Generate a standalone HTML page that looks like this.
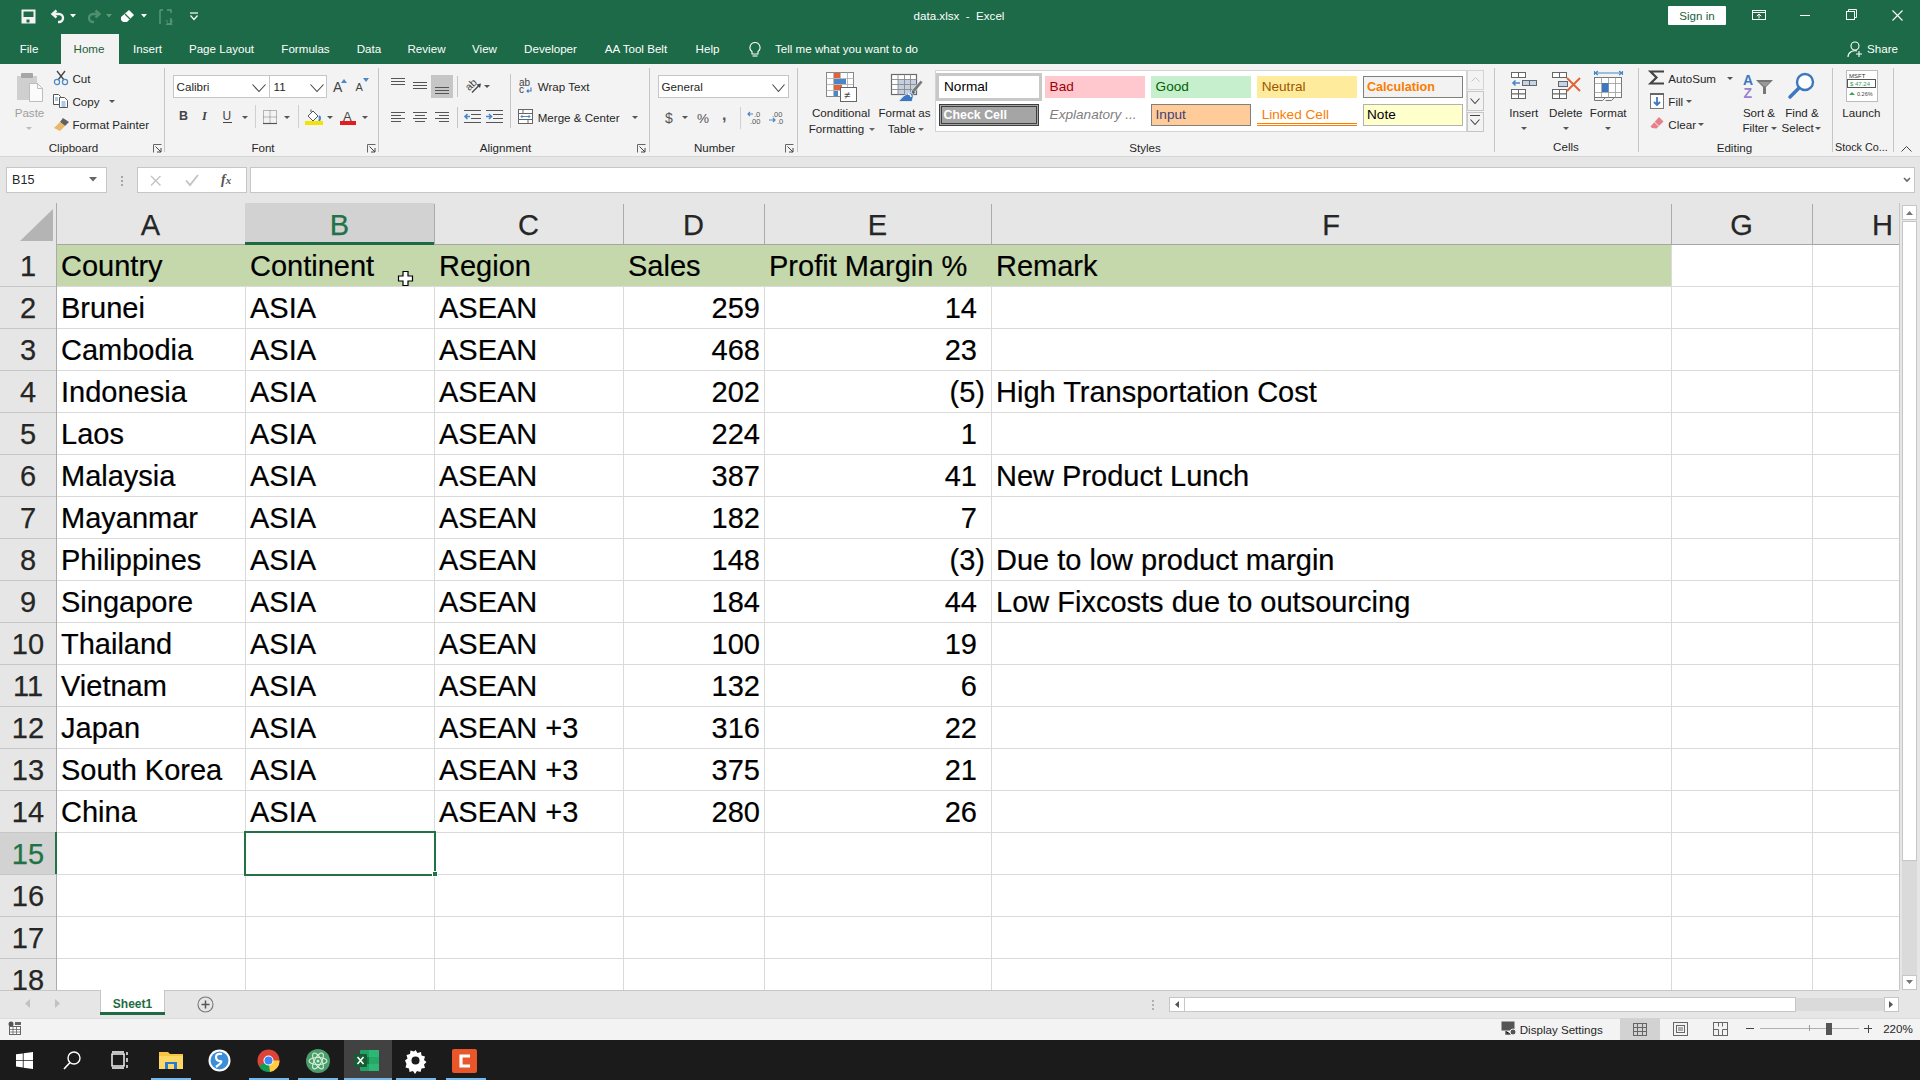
<!DOCTYPE html>
<html><head><meta charset="utf-8">
<style>
*{box-sizing:border-box}
html,body{margin:0;padding:0;width:1920px;height:1080px;overflow:hidden;background:#fff;font-family:"Liberation Sans",sans-serif;position:relative}
.a{position:absolute}
.t{position:absolute;white-space:nowrap}
svg.a{overflow:visible}
.ch{position:absolute;top:203px;height:41px;font-size:29px;text-align:center;line-height:44px;color:#262626;overflow:hidden;-webkit-text-stroke:0.25px #262626}
.ch.sel{color:#217346;-webkit-text-stroke:0.25px #217346}
.rh{position:absolute;left:0;width:56px;height:42px;font-size:29px;text-align:center;line-height:44px;color:#262626;-webkit-text-stroke:0.25px #262626}
.rh.sel{color:#217346;-webkit-text-stroke:0.25px #217346}
.c{position:absolute;height:42px;font-size:29px;line-height:44px;color:#000;white-space:nowrap;-webkit-text-stroke:0.2px #000}
.c.r{text-align:right}
</style></head><body>
<div class="a" style="left:0px;top:203px;width:1920px;height:787px;background:#fff"></div>
<div class="a" style="left:0px;top:203px;width:1899px;height:41px;background:#e6e6e6"></div>
<div class="a" style="left:56px;top:286px;width:1843px;height:1px;background:#dadada"></div>
<div class="a" style="left:56px;top:328px;width:1843px;height:1px;background:#dadada"></div>
<div class="a" style="left:56px;top:370px;width:1843px;height:1px;background:#dadada"></div>
<div class="a" style="left:56px;top:412px;width:1843px;height:1px;background:#dadada"></div>
<div class="a" style="left:56px;top:454px;width:1843px;height:1px;background:#dadada"></div>
<div class="a" style="left:56px;top:496px;width:1843px;height:1px;background:#dadada"></div>
<div class="a" style="left:56px;top:538px;width:1843px;height:1px;background:#dadada"></div>
<div class="a" style="left:56px;top:580px;width:1843px;height:1px;background:#dadada"></div>
<div class="a" style="left:56px;top:622px;width:1843px;height:1px;background:#dadada"></div>
<div class="a" style="left:56px;top:664px;width:1843px;height:1px;background:#dadada"></div>
<div class="a" style="left:56px;top:706px;width:1843px;height:1px;background:#dadada"></div>
<div class="a" style="left:56px;top:748px;width:1843px;height:1px;background:#dadada"></div>
<div class="a" style="left:56px;top:790px;width:1843px;height:1px;background:#dadada"></div>
<div class="a" style="left:56px;top:832px;width:1843px;height:1px;background:#dadada"></div>
<div class="a" style="left:56px;top:874px;width:1843px;height:1px;background:#dadada"></div>
<div class="a" style="left:56px;top:916px;width:1843px;height:1px;background:#dadada"></div>
<div class="a" style="left:56px;top:958px;width:1843px;height:1px;background:#dadada"></div>
<div class="a" style="left:56px;top:1000px;width:1843px;height:1px;background:#dadada"></div>
<div class="a" style="left:245px;top:244px;width:1px;height:746px;background:#dadada"></div>
<div class="a" style="left:434px;top:244px;width:1px;height:746px;background:#dadada"></div>
<div class="a" style="left:623px;top:244px;width:1px;height:746px;background:#dadada"></div>
<div class="a" style="left:764px;top:244px;width:1px;height:746px;background:#dadada"></div>
<div class="a" style="left:991px;top:244px;width:1px;height:746px;background:#dadada"></div>
<div class="a" style="left:1671px;top:244px;width:1px;height:746px;background:#dadada"></div>
<div class="a" style="left:1812px;top:244px;width:1px;height:746px;background:#dadada"></div>
<div class="a" style="left:56px;top:244px;width:1615px;height:42px;background:#c4d8ac"></div>
<div class="a" style="left:245px;top:204px;width:1px;height:40px;background:#ababab"></div>
<div class="a" style="left:434px;top:204px;width:1px;height:40px;background:#ababab"></div>
<div class="a" style="left:623px;top:204px;width:1px;height:40px;background:#ababab"></div>
<div class="a" style="left:764px;top:204px;width:1px;height:40px;background:#ababab"></div>
<div class="a" style="left:991px;top:204px;width:1px;height:40px;background:#ababab"></div>
<div class="a" style="left:1671px;top:204px;width:1px;height:40px;background:#ababab"></div>
<div class="a" style="left:1812px;top:204px;width:1px;height:40px;background:#ababab"></div>
<div class="a" style="left:245px;top:203px;width:189px;height:41px;background:#d2d2d2"></div>
<div class="ch" style="left:56px;width:189px">A</div>
<div class="ch sel" style="left:245px;width:189px">B</div>
<div class="ch" style="left:434px;width:189px">C</div>
<div class="ch" style="left:623px;width:141px">D</div>
<div class="ch" style="left:764px;width:227px">E</div>
<div class="ch" style="left:991px;width:680px">F</div>
<div class="ch" style="left:1671px;width:141px">G</div>
<div class="ch" style="left:1812px;width:87px"><div style="position:absolute;left:0;width:141px;text-align:center">H</div></div>
<div class="a" style="left:0px;top:244px;width:1899px;height:1px;background:#a6a6a6"></div>
<div class="a" style="left:245px;top:242px;width:189px;height:2.5px;background:#1e6b43"></div>
<div class="a" style="left:0px;top:244px;width:56px;height:746px;background:#e6e6e6"></div>
<div class="a" style="left:0px;top:832px;width:56px;height:42px;background:#d2d2d2"></div>
<div class="a" style="left:0px;top:286px;width:56px;height:1px;background:#c6c6c6"></div>
<div class="rh" style="top:244px">1</div>
<div class="a" style="left:0px;top:328px;width:56px;height:1px;background:#c6c6c6"></div>
<div class="rh" style="top:286px">2</div>
<div class="a" style="left:0px;top:370px;width:56px;height:1px;background:#c6c6c6"></div>
<div class="rh" style="top:328px">3</div>
<div class="a" style="left:0px;top:412px;width:56px;height:1px;background:#c6c6c6"></div>
<div class="rh" style="top:370px">4</div>
<div class="a" style="left:0px;top:454px;width:56px;height:1px;background:#c6c6c6"></div>
<div class="rh" style="top:412px">5</div>
<div class="a" style="left:0px;top:496px;width:56px;height:1px;background:#c6c6c6"></div>
<div class="rh" style="top:454px">6</div>
<div class="a" style="left:0px;top:538px;width:56px;height:1px;background:#c6c6c6"></div>
<div class="rh" style="top:496px">7</div>
<div class="a" style="left:0px;top:580px;width:56px;height:1px;background:#c6c6c6"></div>
<div class="rh" style="top:538px">8</div>
<div class="a" style="left:0px;top:622px;width:56px;height:1px;background:#c6c6c6"></div>
<div class="rh" style="top:580px">9</div>
<div class="a" style="left:0px;top:664px;width:56px;height:1px;background:#c6c6c6"></div>
<div class="rh" style="top:622px">10</div>
<div class="a" style="left:0px;top:706px;width:56px;height:1px;background:#c6c6c6"></div>
<div class="rh" style="top:664px">11</div>
<div class="a" style="left:0px;top:748px;width:56px;height:1px;background:#c6c6c6"></div>
<div class="rh" style="top:706px">12</div>
<div class="a" style="left:0px;top:790px;width:56px;height:1px;background:#c6c6c6"></div>
<div class="rh" style="top:748px">13</div>
<div class="a" style="left:0px;top:832px;width:56px;height:1px;background:#c6c6c6"></div>
<div class="rh" style="top:790px">14</div>
<div class="a" style="left:0px;top:874px;width:56px;height:1px;background:#c6c6c6"></div>
<div class="rh sel" style="top:832px">15</div>
<div class="a" style="left:0px;top:916px;width:56px;height:1px;background:#c6c6c6"></div>
<div class="rh" style="top:874px">16</div>
<div class="a" style="left:0px;top:958px;width:56px;height:1px;background:#c6c6c6"></div>
<div class="rh" style="top:916px">17</div>
<div class="a" style="left:0px;top:1000px;width:56px;height:1px;background:#c6c6c6"></div>
<div class="rh" style="top:958px">18</div>
<div class="a" style="left:56px;top:203px;width:1px;height:787px;background:#ababab"></div>
<div class="a" style="left:55px;top:832px;width:2px;height:42px;background:#217346"></div>
<svg class="a" style="left:0px;top:203px;" width="56" height="41" viewBox="0 0 56 41"><polygon points="20,38 53,38 53,6" fill="#b4b4b4"/></svg>
<div class="c" style="top:244px;left:61px">Country</div>
<div class="c" style="top:244px;left:250px">Continent</div>
<div class="c" style="top:244px;left:439px">Region</div>
<div class="c" style="top:244px;left:628px">Sales</div>
<div class="c" style="top:244px;left:769px">Profit Margin %</div>
<div class="c" style="top:244px;left:996px">Remark</div>
<div class="c" style="top:286px;left:61px">Brunei</div>
<div class="c" style="top:286px;left:250px">ASIA</div>
<div class="c" style="top:286px;left:439px">ASEAN</div>
<div class="c r" style="top:286px;left:623px;width:137px">259</div>
<div class="c r" style="top:286px;left:764px;width:213px">14</div>
<div class="c" style="top:328px;left:61px">Cambodia</div>
<div class="c" style="top:328px;left:250px">ASIA</div>
<div class="c" style="top:328px;left:439px">ASEAN</div>
<div class="c r" style="top:328px;left:623px;width:137px">468</div>
<div class="c r" style="top:328px;left:764px;width:213px">23</div>
<div class="c" style="top:370px;left:61px">Indonesia</div>
<div class="c" style="top:370px;left:250px">ASIA</div>
<div class="c" style="top:370px;left:439px">ASEAN</div>
<div class="c r" style="top:370px;left:623px;width:137px">202</div>
<div class="c r" style="top:370px;left:764px;width:221px">(5)</div>
<div class="c" style="top:370px;left:996px">High Transportation Cost</div>
<div class="c" style="top:412px;left:61px">Laos</div>
<div class="c" style="top:412px;left:250px">ASIA</div>
<div class="c" style="top:412px;left:439px">ASEAN</div>
<div class="c r" style="top:412px;left:623px;width:137px">224</div>
<div class="c r" style="top:412px;left:764px;width:213px">1</div>
<div class="c" style="top:454px;left:61px">Malaysia</div>
<div class="c" style="top:454px;left:250px">ASIA</div>
<div class="c" style="top:454px;left:439px">ASEAN</div>
<div class="c r" style="top:454px;left:623px;width:137px">387</div>
<div class="c r" style="top:454px;left:764px;width:213px">41</div>
<div class="c" style="top:454px;left:996px">New Product Lunch</div>
<div class="c" style="top:496px;left:61px">Mayanmar</div>
<div class="c" style="top:496px;left:250px">ASIA</div>
<div class="c" style="top:496px;left:439px">ASEAN</div>
<div class="c r" style="top:496px;left:623px;width:137px">182</div>
<div class="c r" style="top:496px;left:764px;width:213px">7</div>
<div class="c" style="top:538px;left:61px">Philippines</div>
<div class="c" style="top:538px;left:250px">ASIA</div>
<div class="c" style="top:538px;left:439px">ASEAN</div>
<div class="c r" style="top:538px;left:623px;width:137px">148</div>
<div class="c r" style="top:538px;left:764px;width:221px">(3)</div>
<div class="c" style="top:538px;left:996px">Due to low product margin</div>
<div class="c" style="top:580px;left:61px">Singapore</div>
<div class="c" style="top:580px;left:250px">ASIA</div>
<div class="c" style="top:580px;left:439px">ASEAN</div>
<div class="c r" style="top:580px;left:623px;width:137px">184</div>
<div class="c r" style="top:580px;left:764px;width:213px">44</div>
<div class="c" style="top:580px;left:996px">Low Fixcosts due to outsourcing</div>
<div class="c" style="top:622px;left:61px">Thailand</div>
<div class="c" style="top:622px;left:250px">ASIA</div>
<div class="c" style="top:622px;left:439px">ASEAN</div>
<div class="c r" style="top:622px;left:623px;width:137px">100</div>
<div class="c r" style="top:622px;left:764px;width:213px">19</div>
<div class="c" style="top:664px;left:61px">Vietnam</div>
<div class="c" style="top:664px;left:250px">ASIA</div>
<div class="c" style="top:664px;left:439px">ASEAN</div>
<div class="c r" style="top:664px;left:623px;width:137px">132</div>
<div class="c r" style="top:664px;left:764px;width:213px">6</div>
<div class="c" style="top:706px;left:61px">Japan</div>
<div class="c" style="top:706px;left:250px">ASIA</div>
<div class="c" style="top:706px;left:439px">ASEAN +3</div>
<div class="c r" style="top:706px;left:623px;width:137px">316</div>
<div class="c r" style="top:706px;left:764px;width:213px">22</div>
<div class="c" style="top:748px;left:61px">South Korea</div>
<div class="c" style="top:748px;left:250px">ASIA</div>
<div class="c" style="top:748px;left:439px">ASEAN +3</div>
<div class="c r" style="top:748px;left:623px;width:137px">375</div>
<div class="c r" style="top:748px;left:764px;width:213px">21</div>
<div class="c" style="top:790px;left:61px">China</div>
<div class="c" style="top:790px;left:250px">ASIA</div>
<div class="c" style="top:790px;left:439px">ASEAN +3</div>
<div class="c r" style="top:790px;left:623px;width:137px">280</div>
<div class="c r" style="top:790px;left:764px;width:213px">26</div>
<div class="a" style="left:244px;top:831px;width:192px;height:45px;border:2px solid #217346;background:transparent"></div>
<div class="a" style="left:432px;top:871px;width:6px;height:6px;background:#217346;border:1px solid #fff"></div>
<div class="a" style="left:1899px;top:203px;width:1px;height:787px;background:#c6c6c6"></div>
<div class="a" style="left:1900px;top:203px;width:20px;height:787px;background:#e6e6e6"></div>
<div class="a" style="left:1902px;top:205px;width:15px;height:15px;background:#fff;border:1px solid #c6c6c6"></div>
<svg class="a" style="left:1902px;top:205px;" width="15" height="15" viewBox="0 0 15 15"><polygon points="4,10 11,10 7.5,6" fill="#777"/></svg>
<div class="a" style="left:1902px;top:221px;width:15px;height:640px;background:#fff;border:1px solid #c6c6c6"></div>
<div class="a" style="left:1902px;top:861px;width:15px;height:115px;background:#dadada"></div>
<div class="a" style="left:1902px;top:975px;width:15px;height:15px;background:#fff;border:1px solid #c6c6c6"></div>
<svg class="a" style="left:1902px;top:975px;" width="15" height="15" viewBox="0 0 15 15"><polygon points="4,5 11,5 7.5,9" fill="#777"/></svg>
<svg class="a" style="left:398px;top:271px;" width="15" height="15" viewBox="0 0 15 15"><path d="M5 0.5h5v4.5h4.5v5H10v4.5H5V10H0.5V5H5z" fill="#fff" stroke="#000" stroke-width="1.2"/></svg>
<div class="a" style="left:0px;top:0px;width:1920px;height:64px;background:#1c6a48"></div>
<svg class="a" style="left:21px;top:9px;" width="16" height="16" viewBox="0 0 16 16"><rect x="1.5" y="1.5" width="12" height="12" fill="none" stroke="#f3f3f3" stroke-width="2"/><rect x="2" y="8" width="11" height="6" fill="#f3f3f3"/><rect x="5.5" y="10.5" width="3" height="3" fill="#1c6a48"/></svg>
<svg class="a" style="left:50px;top:9px;" width="18" height="16" viewBox="0 0 18 16"><path d="M3 5h6a4 4 0 0 1 0 8h-1" fill="none" stroke="#f3f3f3" stroke-width="2.4"/><path d="M6.5 1.5L2.5 5l4 3.5" stroke="#f3f3f3" stroke-width="2.4" fill="none"/></svg>
<svg class="a" style="left:70px;top:14px;" width="7" height="4" viewBox="0 0 7 4"><polygon points="0,0 6,0 3,3.5" fill="#fff"/></svg>
<svg class="a" style="left:86px;top:9px;" width="16" height="16" viewBox="0 0 16 16"><path d="M13 5H7a4 4 0 0 0 0 8h1" fill="none" stroke="#4f8f6c" stroke-width="2.4"/><path d="M9.5 1.5l4 3.5-4 3.5" stroke="#4f8f6c" stroke-width="2.4" fill="none"/></svg>
<svg class="a" style="left:106px;top:14px;" width="7" height="4" viewBox="0 0 7 4"><polygon points="0,0 6,0 3,3.5" fill="#5d9b78"/></svg>
<svg class="a" style="left:120px;top:9px;" width="15" height="15" viewBox="0 0 15 15"><path d="M9 1l5 5-7 7-4 0-2-2 0-3z" fill="#fff"/><path d="M5 5l5 5" stroke="#217346" stroke-width="1.2"/></svg>
<svg class="a" style="left:141px;top:14px;" width="7" height="4" viewBox="0 0 7 4"><polygon points="0,0 6,0 3,3.5" fill="#fff"/></svg>
<svg class="a" style="left:157px;top:8px;" width="18" height="18" viewBox="0 0 18 18"><path d="M3 2h3M3 2v14M10 2h4v3M14 10v6h-4" stroke="#5d9b78" stroke-width="1.4" fill="none"/><text x="8" y="17" font-size="7" fill="#5d9b78" font-family="Liberation Sans">12</text></svg>
<svg class="a" style="left:189px;top:12px;" width="10" height="9" viewBox="0 0 10 9"><path d="M1 1h8" stroke="#fff" stroke-width="1.2"/><path d="M1.5 3.5l3.5 4 3.5-4" fill="none" stroke="#fff" stroke-width="1.2"/></svg>
<div class="t" style="left:759px;width:400px;text-align:center;top:9.78px;font-size:11.6px;line-height:11.6px;color:#fff;">data.xlsx&nbsp; -&nbsp; Excel</div>
<div class="a" style="left:1668px;top:6px;width:58px;height:19px;background:#fff;border-radius:1px"></div>
<div class="t" style="left:1497px;width:400px;text-align:center;top:9.88px;font-size:11.6px;line-height:11.6px;color:#215f3b;">Sign in</div>
<svg class="a" style="left:1752px;top:10px;" width="14" height="10" viewBox="0 0 14 10"><rect x="0.5" y="0.5" width="13" height="9" fill="none" stroke="#fff"/><path d="M0.5 2.5h13" stroke="#fff"/><path d="M7 8.5V4M4.8 6.2L7 4l2.2 2.2" stroke="#fff" fill="none"/></svg>
<div class="a" style="left:1800px;top:15px;width:10px;height:1px;background:#fff"></div>
<svg class="a" style="left:1846px;top:9px;" width="11" height="11" viewBox="0 0 11 11"><rect x="0.5" y="2.5" width="8" height="8" fill="none" stroke="#fff"/><path d="M2.5 2.5V0.5h8v8h-2" fill="none" stroke="#fff"/></svg>
<svg class="a" style="left:1892px;top:10px;" width="11" height="11" viewBox="0 0 11 11"><path d="M0.5 0.5l10 10M10.5 0.5l-10 10" stroke="#fff" stroke-width="1.1"/></svg>
<div class="a" style="left:61px;top:34px;width:58px;height:30px;background:#f3f3f3"></div>
<div class="t" style="left:-171.0px;width:400px;text-align:center;top:43.18px;font-size:11.6px;line-height:11.6px;color:#fff;">File</div>
<div class="t" style="left:-111.0px;width:400px;text-align:center;top:43.18px;font-size:11.6px;line-height:11.6px;color:#215f3b;">Home</div>
<div class="t" style="left:-52.5px;width:400px;text-align:center;top:43.18px;font-size:11.6px;line-height:11.6px;color:#fff;">Insert</div>
<div class="t" style="left:21.5px;width:400px;text-align:center;top:43.18px;font-size:11.6px;line-height:11.6px;color:#fff;">Page Layout</div>
<div class="t" style="left:105.5px;width:400px;text-align:center;top:43.18px;font-size:11.6px;line-height:11.6px;color:#fff;">Formulas</div>
<div class="t" style="left:169.0px;width:400px;text-align:center;top:43.18px;font-size:11.6px;line-height:11.6px;color:#fff;">Data</div>
<div class="t" style="left:226.5px;width:400px;text-align:center;top:43.18px;font-size:11.6px;line-height:11.6px;color:#fff;">Review</div>
<div class="t" style="left:284.5px;width:400px;text-align:center;top:43.18px;font-size:11.6px;line-height:11.6px;color:#fff;">View</div>
<div class="t" style="left:350.5px;width:400px;text-align:center;top:43.18px;font-size:11.6px;line-height:11.6px;color:#fff;">Developer</div>
<div class="t" style="left:436.0px;width:400px;text-align:center;top:43.18px;font-size:11.6px;line-height:11.6px;color:#fff;">AA Tool Belt</div>
<div class="t" style="left:507.5px;width:400px;text-align:center;top:43.18px;font-size:11.6px;line-height:11.6px;color:#fff;">Help</div>
<div class="t" style="left:775px;top:43.18px;font-size:11.6px;line-height:11.6px;color:#fff;">Tell me what you want to do</div>
<svg class="a" style="left:747px;top:41px;" width="16" height="17" viewBox="0 0 16 17"><path d="M8 1.5a5 5 0 0 0-3 9v2.5h6v-2.5a5 5 0 0 0-3-9z" fill="none" stroke="#fff" stroke-width="1.1"/><path d="M5.5 15h5" stroke="#fff" stroke-width="1.1"/></svg>
<svg class="a" style="left:1847px;top:41px;" width="17" height="17" viewBox="0 0 17 17"><circle cx="8" cy="5" r="4" fill="none" stroke="#fff" stroke-width="1.1"/><path d="M1 16a7 6 0 0 1 9-6" fill="none" stroke="#fff" stroke-width="1.1"/><path d="M12 10v6M9 13h6" stroke="#fff" stroke-width="1.1"/></svg>
<div class="t" style="left:1867px;top:42.68px;font-size:11.6px;line-height:11.6px;color:#fff;font-weight:normal">Share</div>
<div class="a" style="left:0px;top:64px;width:1920px;height:93px;background:#f3f3f3"></div>
<div class="a" style="left:0px;top:156px;width:1920px;height:1px;background:#d6d6d6"></div>
<svg class="a" style="left:16px;top:72px;" width="30" height="30" viewBox="0 0 30 30"><rect x="1" y="4" width="20" height="24" fill="#cfcfcf"/><rect x="5" y="1" width="12" height="5" rx="1" fill="#a6a6a6"/><path d="M13.5 11.5h8l5 5v13h-13z" fill="#fbfbfb" stroke="#bdbdbd"/><path d="M21.5 11.5v5h5" fill="none" stroke="#bdbdbd"/></svg>
<div class="t" style="left:-170.5px;width:400px;text-align:center;top:106.58px;font-size:11.6px;line-height:11.6px;color:#a0a0a0;">Paste</div>
<svg class="a" style="left:25.5px;top:126.5px;" width="6" height="3" viewBox="0 0 6 3"><polygon points="0,0 6,0 3,3" fill="#bdbdbd"/></svg>
<svg class="a" style="left:53px;top:70px;" width="16" height="15" viewBox="0 0 16 15"><path d="M4 1l7 9M12 1L5 10" stroke="#444" stroke-width="1.3"/><circle cx="4" cy="12" r="2.6" fill="none" stroke="#4a87c8" stroke-width="1.2"/><circle cx="12" cy="12" r="2.6" fill="none" stroke="#4a87c8" stroke-width="1.2"/></svg>
<div class="t" style="left:72.4px;top:72.88px;font-size:11.6px;line-height:11.6px;color:#262626;">Cut</div>
<svg class="a" style="left:53px;top:94px;" width="16" height="14" viewBox="0 0 16 14"><path d="M0.5 0.5h5l2 2v8h-7z" fill="#fff" stroke="#555"/><path d="M6.5 3.5h5l3 3v7h-8z" fill="#fff" stroke="#555"/><path d="M2 4h3M2 6h3M8.5 8h4M8.5 10h4M8.5 12h4" stroke="#4a87c8" stroke-width="0.9"/></svg>
<div class="t" style="left:72.4px;top:95.88px;font-size:11.6px;line-height:11.6px;color:#262626;">Copy</div>
<svg class="a" style="left:109.4px;top:100.0px;" width="6" height="3" viewBox="0 0 6 3"><polygon points="0,0 6,0 3,3" fill="#555"/></svg>
<svg class="a" style="left:53px;top:117px;" width="17" height="14" viewBox="0 0 17 14"><path d="M10 1l6 4-4 4-5-4z" fill="#606060"/><path d="M7 5l5 4-5 5-6-3z" fill="#e6b867"/></svg>
<div class="t" style="left:72.4px;top:119.08px;font-size:11.6px;line-height:11.6px;color:#262626;">Format Painter</div>
<div class="t" style="left:-126.5px;width:400px;text-align:center;top:141.78px;font-size:11.6px;line-height:11.6px;color:#262626;">Clipboard</div>
<svg class="a" style="left:152.5px;top:143.5px;" width="9" height="9" viewBox="0 0 9 9"><path d="M0.5 8.5V0.5h8" fill="none" stroke="#666"/><path d="M2.5 2.5l5.5 5.5M8 4v4H4" fill="none" stroke="#444"/></svg>
<div class="a" style="left:164px;top:68px;width:1px;height:84px;background:#c6c6c6"></div>
<div class="a" style="left:173px;top:75px;width:97px;height:23px;background:#fff;border:1px solid #c6c6c6"></div>
<div class="t" style="left:176.6px;top:81.18px;font-size:11.6px;line-height:11.6px;color:#262626;">Calibri</div>
<svg class="a" style="left:252px;top:83.5px;" width="14" height="8" viewBox="0 0 14 8"><path d="M0.5 0.5L7.0 7.5L13.5 0.5" fill="none" stroke="#444" stroke-width="1.1"/></svg>
<div class="a" style="left:269px;top:75px;width:58px;height:23px;background:#fff;border:1px solid #c6c6c6"></div>
<div class="t" style="left:273.6px;top:81.18px;font-size:11.6px;line-height:11.6px;color:#262626;">11</div>
<svg class="a" style="left:309.5px;top:83.5px;" width="14" height="8" viewBox="0 0 14 8"><path d="M0.5 0.5L7.0 7.5L13.5 0.5" fill="none" stroke="#444" stroke-width="1.1"/></svg>
<div class="t" style="left:333px;top:79.65px;font-size:14px;line-height:14px;color:#444;">A</div>
<svg class="a" style="left:341px;top:78.5px;" width="6" height="4" viewBox="0 0 6 4"><polygon points="0,4 6,4 3,0" fill="#4a87c8"/></svg>
<div class="t" style="left:355.5px;top:82.19px;font-size:11px;line-height:11px;color:#444;">A</div>
<svg class="a" style="left:363px;top:78px;" width="6" height="4" viewBox="0 0 6 4"><polygon points="0,0 6,0 3,4" fill="#4a87c8"/></svg>
<div class="t" style="left:179px;top:110.42px;font-size:12.5px;line-height:12.5px;color:#444;font-weight:bold;">B</div>
<div class="t" style="left:202px;top:110.42px;font-size:12.5px;line-height:12.5px;color:#444;font-style:italic;font-family:Liberation Serif;font-weight:bold">I</div>
<div class="t" style="left:222.5px;top:110.34px;font-size:12px;line-height:12px;color:#444;">U</div>
<div class="a" style="left:223px;top:122px;width:9px;height:1.2px;background:#444"></div>
<svg class="a" style="left:241.5px;top:115.5px;" width="6" height="3" viewBox="0 0 6 3"><polygon points="0,0 6,0 3,3" fill="#555"/></svg>
<div class="a" style="left:255px;top:105px;width:1px;height:23px;background:#d0d0d0"></div>
<svg class="a" style="left:263px;top:110px;" width="15" height="15" viewBox="0 0 15 15"><rect x="0.5" y="0.5" width="13" height="13" fill="none" stroke="#777" stroke-dasharray="1 1"/><path d="M7 0.5v13M0.5 7h13" stroke="#777" stroke-dasharray="1 1"/><path d="M0 13.5h14" stroke="#555" stroke-width="1.2"/></svg>
<svg class="a" style="left:284px;top:115.5px;" width="6" height="3" viewBox="0 0 6 3"><polygon points="0,0 6,0 3,3" fill="#555"/></svg>
<div class="a" style="left:298px;top:105px;width:1px;height:23px;background:#d0d0d0"></div>
<svg class="a" style="left:305px;top:109px;" width="18" height="17" viewBox="0 0 18 17"><path d="M3 7l5-5 5 5-5 5z" fill="#fff" stroke="#555"/><path d="M6 3V0.5" stroke="#555"/><path d="M14 7q2 2 0 5" fill="#4a87c8" stroke="#4a87c8" stroke-width="2"/><rect x="0" y="12" width="18" height="4" fill="#f2e400"/></svg>
<svg class="a" style="left:327px;top:115.5px;" width="6" height="3" viewBox="0 0 6 3"><polygon points="0,0 6,0 3,3" fill="#555"/></svg>
<div class="t" style="left:343px;top:109.50px;font-size:13px;line-height:13px;color:#444;">A</div>
<div class="a" style="left:340px;top:121.3px;width:16px;height:3.5px;background:#e61b1b"></div>
<svg class="a" style="left:361.5px;top:115.5px;" width="6" height="3" viewBox="0 0 6 3"><polygon points="0,0 6,0 3,3" fill="#555"/></svg>
<div class="t" style="left:63px;width:400px;text-align:center;top:141.88px;font-size:11.6px;line-height:11.6px;color:#262626;">Font</div>
<svg class="a" style="left:366.5px;top:143.5px;" width="9" height="9" viewBox="0 0 9 9"><path d="M0.5 8.5V0.5h8" fill="none" stroke="#666"/><path d="M2.5 2.5l5.5 5.5M8 4v4H4" fill="none" stroke="#444"/></svg>
<div class="a" style="left:378px;top:68px;width:1px;height:84px;background:#c6c6c6"></div>
<svg class="a" style="left:391px;top:78px;" width="14" height="10" viewBox="0 0 14 10"><path d="M0 0.5h14" stroke="#555"/><path d="M0 3.5h14" stroke="#555"/><path d="M0 6.5h14" stroke="#555"/></svg>
<svg class="a" style="left:413px;top:81.5px;" width="14" height="10" viewBox="0 0 14 10"><path d="M0 0.5h14" stroke="#555"/><path d="M0 3.5h14" stroke="#555"/><path d="M0 6.5h14" stroke="#555"/></svg>
<div class="a" style="left:431px;top:75px;width:22px;height:23px;background:#c6c6c6"></div>
<svg class="a" style="left:435px;top:86.5px;" width="14" height="10" viewBox="0 0 14 10"><path d="M0 0.5h14" stroke="#555"/><path d="M0 3.5h14" stroke="#555"/><path d="M0 6.5h14" stroke="#555"/></svg>
<div class="a" style="left:457px;top:76px;width:1px;height:21px;background:#c6c6c6"></div>
<svg class="a" style="left:464px;top:77px;" width="20" height="17" viewBox="0 0 20 17"><text x="1" y="12" font-size="10.5" fill="#444" font-family="Liberation Sans" transform="rotate(-45 6 8)">ab</text><path d="M8 15.5L15 8.5" stroke="#444" stroke-width="1.2"/><polygon points="17,6.5 12.5,7.5 16,11" fill="#444"/></svg>
<svg class="a" style="left:484.4px;top:84.5px;" width="6" height="3" viewBox="0 0 6 3"><polygon points="0,0 6,0 3,3" fill="#555"/></svg>
<svg class="a" style="left:391px;top:111.5px;" width="14" height="13" viewBox="0 0 14 13"><path d="M0 0.5h14" stroke="#555"/><path d="M0 3.5h10" stroke="#555"/><path d="M0 6.5h14" stroke="#555"/><path d="M0 9.5h10" stroke="#555"/></svg>
<svg class="a" style="left:413px;top:111.5px;" width="14" height="13" viewBox="0 0 14 13"><path d="M0 0.5h14" stroke="#555"/><path d="M2 3.5h10" stroke="#555"/><path d="M0 6.5h14" stroke="#555"/><path d="M2 9.5h10" stroke="#555"/></svg>
<svg class="a" style="left:435px;top:111.5px;" width="14" height="13" viewBox="0 0 14 13"><path d="M0 0.5h14" stroke="#555"/><path d="M4 3.5h10" stroke="#555"/><path d="M0 6.5h14" stroke="#555"/><path d="M4 9.5h10" stroke="#555"/></svg>
<div class="a" style="left:457px;top:107px;width:1px;height:21px;background:#c6c6c6"></div>
<svg class="a" style="left:464px;top:110px;" width="17" height="14" viewBox="0 0 17 14"><path d="M0 0.5h17M7 4.5h10M7 8.5h10M0 12.5h17" stroke="#555"/><path d="M1 6.5h5M3.5 4L1 6.5 3.5 9" stroke="#4a87c8" stroke-width="1.6" fill="none"/></svg>
<svg class="a" style="left:486px;top:110px;" width="17" height="14" viewBox="0 0 17 14"><path d="M0 0.5h17M7 4.5h10M7 8.5h10M0 12.5h17" stroke="#555"/><path d="M0 6.5h5M3 4l2.5 2.5L3 9" stroke="#4a87c8" stroke-width="1.6" fill="none"/></svg>
<div class="a" style="left:510px;top:74px;width:1px;height:54px;background:#c6c6c6"></div>
<svg class="a" style="left:519px;top:78px;" width="14" height="16" viewBox="0 0 14 16"><text x="0" y="8" font-size="10" fill="#444" font-family="Liberation Sans">ab</text><text x="0" y="15" font-size="10" fill="#444" font-family="Liberation Sans">c</text><path d="M12 9.5v3.5H8M9.5 11.5L8 13l1.5 1.5" fill="none" stroke="#3c78c0" stroke-width="1.1"/></svg>
<div class="t" style="left:537.7px;top:81.18px;font-size:11.6px;line-height:11.6px;color:#262626;">Wrap Text</div>
<svg class="a" style="left:518px;top:109px;" width="16" height="15" viewBox="0 0 16 15"><rect x="0.5" y="0.5" width="14" height="14" fill="#fff" stroke="#666"/><path d="M0.5 4.5h14M0.5 10.5h14M5 0.5v4M10 10.5v4" stroke="#666"/><path d="M3 7.5h9M4.5 6L3 7.5 4.5 9M10.5 6L12 7.5 10.5 9" fill="none" stroke="#4a87c8"/></svg>
<div class="t" style="left:537.7px;top:111.78px;font-size:11.6px;line-height:11.6px;color:#262626;">Merge &amp; Center</div>
<svg class="a" style="left:631.7px;top:116.0px;" width="6" height="3" viewBox="0 0 6 3"><polygon points="0,0 6,0 3,3" fill="#555"/></svg>
<div class="t" style="left:305.5px;width:400px;text-align:center;top:141.68px;font-size:11.6px;line-height:11.6px;color:#262626;">Alignment</div>
<svg class="a" style="left:637px;top:143.5px;" width="9" height="9" viewBox="0 0 9 9"><path d="M0.5 8.5V0.5h8" fill="none" stroke="#666"/><path d="M2.5 2.5l5.5 5.5M8 4v4H4" fill="none" stroke="#444"/></svg>
<div class="a" style="left:649px;top:68px;width:1px;height:84px;background:#c6c6c6"></div>
<div class="a" style="left:658px;top:75px;width:131px;height:23px;background:#fff;border:1px solid #c6c6c6"></div>
<div class="t" style="left:661.6px;top:81.18px;font-size:11.6px;line-height:11.6px;color:#262626;">General</div>
<svg class="a" style="left:771.5px;top:83.5px;" width="13" height="8" viewBox="0 0 13 8"><path d="M0.5 0.5L6.5 7.5L12.5 0.5" fill="none" stroke="#444" stroke-width="1.1"/></svg>
<div class="t" style="left:665px;top:111.15px;font-size:14px;line-height:14px;color:#555;">$</div>
<svg class="a" style="left:682px;top:115.5px;" width="6" height="3" viewBox="0 0 6 3"><polygon points="0,0 6,0 3,3" fill="#555"/></svg>
<div class="t" style="left:697px;top:111.57px;font-size:13.5px;line-height:13.5px;color:#555;">%</div>
<div class="t" style="left:722px;top:107.46px;font-size:16px;line-height:16px;color:#555;font-weight:bold;">,</div>
<div class="a" style="left:740px;top:107px;width:1px;height:22px;background:#d0d0d0"></div>
<svg class="a" style="left:747px;top:110px;" width="16" height="14" viewBox="0 0 16 14"><text x="7" y="6.5" font-size="7.5" fill="#555" font-family="Liberation Sans">.0</text><text x="3" y="13.5" font-size="7.5" fill="#555" font-family="Liberation Sans">.00</text><path d="M1 4h5M3 2L1 4l2 2" fill="none" stroke="#4a87c8" stroke-width="1.2"/></svg>
<svg class="a" style="left:769px;top:110px;" width="16" height="14" viewBox="0 0 16 14"><text x="3" y="6.5" font-size="7.5" fill="#555" font-family="Liberation Sans">.00</text><text x="8" y="13.5" font-size="7.5" fill="#555" font-family="Liberation Sans">.0</text><path d="M0 10h6M4 8l2 2-2 2" fill="none" stroke="#4a87c8" stroke-width="1.2"/></svg>
<div class="t" style="left:514.5px;width:400px;text-align:center;top:141.78px;font-size:11.6px;line-height:11.6px;color:#262626;">Number</div>
<svg class="a" style="left:784.5px;top:143.5px;" width="9" height="9" viewBox="0 0 9 9"><path d="M0.5 8.5V0.5h8" fill="none" stroke="#666"/><path d="M2.5 2.5l5.5 5.5M8 4v4H4" fill="none" stroke="#444"/></svg>
<div class="a" style="left:796.5px;top:68px;width:1px;height:84px;background:#c6c6c6"></div>
<svg class="a" style="left:826px;top:72px;" width="32" height="31" viewBox="0 0 32 31"><rect x="0.5" y="0.5" width="27" height="24" fill="#fff" stroke="#888"/><path d="M0.5 6.5h27M0.5 12.5h27M0.5 18.5h27M7.5 0.5v24M14.5 0.5v24M21.5 0.5v24" stroke="#aaa" stroke-width="0.8"/><rect x="8" y="1" width="6" height="5" fill="#e0633a"/><rect x="8" y="7" width="12" height="5" fill="#4a87c8"/><rect x="8" y="13" width="8" height="5" fill="#e0633a"/><rect x="8" y="19" width="4" height="5" fill="#4a87c8"/><rect x="14.5" y="15.5" width="16" height="14" fill="#fff" stroke="#666"/><text x="18" y="27" font-size="11" fill="#444" font-family="Liberation Sans">≠</text></svg>
<div class="t" style="left:641px;width:400px;text-align:center;top:107.08px;font-size:11.6px;line-height:11.6px;color:#262626;">Conditional</div>
<div class="t" style="left:636.5px;width:400px;text-align:center;top:122.88px;font-size:11.6px;line-height:11.6px;color:#262626;">Formatting</div>
<svg class="a" style="left:868.5px;top:127.5px;" width="6" height="3" viewBox="0 0 6 3"><polygon points="0,0 6,0 3,3" fill="#666"/></svg>
<svg class="a" style="left:891px;top:72px;" width="32" height="32" viewBox="0 0 32 32"><rect x="0.5" y="2.5" width="25" height="20" fill="#fff" stroke="#6a6a6a" stroke-width="1.2"/><rect x="7" y="7.5" width="18" height="14.5" fill="#c5cfe0"/><path d="M0.5 7.5h25M0.5 12.5h25M0.5 17.5h25M7 2.5v20M13.5 2.5v20M19.5 2.5v20" stroke="#8a8a8a" stroke-width="0.9"/><path d="M29.5 8.5L32 10 24 20 21 18z" fill="#777" stroke="#f3f3f3" stroke-width="0.6"/><path d="M21 18l3 2-2.5 3z" fill="#555"/><path d="M19 20.5q4 1 3 5l-1 4H7.5q5-7 11.5-9z" fill="#3c78c0" stroke="#f3f3f3" stroke-width="0.8"/><path d="M17 22q3 0 3 3" stroke="#fff" stroke-width="1.3" fill="none"/></svg>
<div class="t" style="left:704.5px;width:400px;text-align:center;top:107.08px;font-size:11.6px;line-height:11.6px;color:#262626;">Format as</div>
<div class="t" style="left:701.5px;width:400px;text-align:center;top:122.88px;font-size:11.6px;line-height:11.6px;color:#262626;">Table</div>
<svg class="a" style="left:917.5px;top:127.5px;" width="6" height="3" viewBox="0 0 6 3"><polygon points="0,0 6,0 3,3" fill="#666"/></svg>
<div class="a" style="left:935px;top:70px;width:532px;height:62px;background:#fff;border:1px solid #d4d4d4"></div>
<div class="a" style="left:936px;top:73px;width:106px;height:28px;background:#fff;border:3px solid #c8c8c8"></div>
<div class="t" style="left:944px;top:80.49px;font-size:13.6px;line-height:13.6px;color:#000;">Normal</div>
<div class="a" style="left:1045px;top:76px;width:100px;height:22px;background:#ffc7ce"></div>
<div class="t" style="left:1049.6px;top:80.49px;font-size:13.6px;line-height:13.6px;color:#9c0006;">Bad</div>
<div class="a" style="left:1151px;top:76px;width:100px;height:22px;background:#c6efce"></div>
<div class="t" style="left:1155.6px;top:80.49px;font-size:13.6px;line-height:13.6px;color:#006100;">Good</div>
<div class="a" style="left:1257px;top:76px;width:100px;height:22px;background:#ffeb9c"></div>
<div class="t" style="left:1261.7px;top:80.49px;font-size:13.6px;line-height:13.6px;color:#9c5700;">Neutral</div>
<div class="a" style="left:1363px;top:76px;width:100px;height:22px;background:#f2f2f2;border:1px solid #7f7f7f"></div>
<div class="t" style="left:1367px;top:81.33px;font-size:12.6px;line-height:12.6px;color:#fa7d00;font-weight:bold;">Calculation</div>
<div class="a" style="left:939px;top:104px;width:100px;height:22px;background:#a5a5a5;border:3px double #3f3f3f"></div>
<div class="t" style="left:943.5px;top:108.70px;font-size:12.4px;line-height:12.4px;color:#fff;font-weight:bold;">Check Cell</div>
<div class="t" style="left:1049.6px;top:107.69px;font-size:13.6px;line-height:13.6px;color:#7f7f7f;font-style:italic">Explanatory ...</div>
<div class="a" style="left:1151px;top:104px;width:100px;height:22px;background:#ffcc99;border:1px solid #7f7f7f"></div>
<div class="t" style="left:1155.6px;top:107.69px;font-size:13.6px;line-height:13.6px;color:#3f3f76;">Input</div>
<div class="t" style="left:1261.7px;top:107.69px;font-size:13.6px;line-height:13.6px;color:#fa7d00;">Linked Cell</div>
<div class="a" style="left:1257px;top:123px;width:100px;height:3px;border-top:1px solid #ff8001;border-bottom:1px solid #ff8001"></div>
<div class="a" style="left:1363px;top:104px;width:100px;height:22px;background:#ffffcc;border:1px solid #b2b2b2"></div>
<div class="t" style="left:1367px;top:107.69px;font-size:13.6px;line-height:13.6px;color:#000;">Note</div>
<div class="a" style="left:1467px;top:70px;width:17px;height:20px;background:#f3f3f3;border:1px solid #d4d4d4"></div>
<svg class="a" style="left:1471px;top:77px;" width="9" height="5" viewBox="0 0 9 5"><path d="M0.5 4.5L4.5 0.5 8.5 4.5" fill="none" stroke="#c6c6c6"/></svg>
<div class="a" style="left:1467px;top:91px;width:17px;height:20px;background:#f3f3f3;border:1px solid #c6c6c6"></div>
<svg class="a" style="left:1470px;top:98px;" width="10" height="6" viewBox="0 0 10 6"><path d="M0.5 0.5L5.0 5.5L9.5 0.5" fill="none" stroke="#444" stroke-width="1.1"/></svg>
<div class="a" style="left:1467px;top:112px;width:17px;height:20px;background:#f3f3f3;border:1px solid #c6c6c6"></div>
<div class="a" style="left:1470px;top:114.5px;width:10px;height:1px;background:#444"></div>
<svg class="a" style="left:1470px;top:119px;" width="10" height="6" viewBox="0 0 10 6"><path d="M0.5 0.5L5.0 5.5L9.5 0.5" fill="none" stroke="#444" stroke-width="1.1"/></svg>
<div class="t" style="left:945px;width:400px;text-align:center;top:141.68px;font-size:11.6px;line-height:11.6px;color:#262626;">Styles</div>
<div class="a" style="left:1494px;top:68px;width:1px;height:84px;background:#c6c6c6"></div>
<svg class="a" style="left:1511px;top:72px;" width="26" height="27" viewBox="0 0 26 27"><rect x="0.5" y="0.5" width="7" height="5" fill="#fff" stroke="#666"/><rect x="7.5" y="0.5" width="7" height="5" fill="#fff" stroke="#666"/><rect x="0.5" y="17.5" width="7" height="4.5" fill="#fff" stroke="#666"/><rect x="7.5" y="17.5" width="7" height="4.5" fill="#fff" stroke="#666"/><rect x="0.5" y="22" width="7" height="4.5" fill="#fff" stroke="#666"/><rect x="7.5" y="22" width="7" height="4.5" fill="#fff" stroke="#666"/><rect x="11.5" y="8.5" width="7" height="5" fill="#c5d3e8" stroke="#666"/><rect x="18.5" y="8.5" width="7" height="5" fill="#c5d3e8" stroke="#666"/><path d="M2 11h7M4.5 8.5L2 11l2.5 2.5" fill="none" stroke="#4a87c8" stroke-width="1.6"/></svg>
<div class="t" style="left:1323.8px;width:400px;text-align:center;top:107.08px;font-size:11.6px;line-height:11.6px;color:#262626;">Insert</div>
<svg class="a" style="left:1520.6px;top:126.5px;" width="6" height="3" viewBox="0 0 6 3"><polygon points="0,0 6,0 3,3" fill="#555"/></svg>
<svg class="a" style="left:1552px;top:72px;" width="30" height="27" viewBox="0 0 30 27"><rect x="0.5" y="0.5" width="7" height="5" fill="#fff" stroke="#666"/><rect x="7.5" y="0.5" width="7" height="5" fill="#fff" stroke="#666"/><rect x="0.5" y="17.5" width="7" height="4.5" fill="#fff" stroke="#666"/><rect x="7.5" y="17.5" width="7" height="4.5" fill="#fff" stroke="#666"/><rect x="0.5" y="22" width="7" height="4.5" fill="#fff" stroke="#666"/><rect x="7.5" y="22" width="7" height="4.5" fill="#fff" stroke="#666"/><rect x="6.5" y="9.5" width="9" height="5" fill="#c5d3e8" stroke="#666"/><path d="M15 6l13 13M28 6L15 19" stroke="#e0633a" stroke-width="2"/></svg>
<div class="t" style="left:1365.8px;width:400px;text-align:center;top:107.08px;font-size:11.6px;line-height:11.6px;color:#262626;">Delete</div>
<svg class="a" style="left:1562.6px;top:126.5px;" width="6" height="3" viewBox="0 0 6 3"><polygon points="0,0 6,0 3,3" fill="#555"/></svg>
<svg class="a" style="left:1594px;top:71px;" width="29" height="31" viewBox="0 0 29 31"><path d="M0.5 0v4M28.5 0v4M1 2h27M4 0l-3 2 3 2M25 0l3 2-3 2" fill="none" stroke="#4a87c8" stroke-width="1.1"/><rect x="0.5" y="6.5" width="27" height="20" fill="#fff" stroke="#777"/><path d="M0.5 12.5h27M0.5 21.5h27M7.5 6.5v20M14.5 6.5v20M21.5 6.5v20" stroke="#999" stroke-width="0.8"/><rect x="8" y="12" width="6.5" height="9" fill="#3c78c0"/><path d="M0.5 26.5v3h8l3-3M11.5 29.5h6l3-3" fill="none" stroke="#777"/></svg>
<div class="t" style="left:1408.2px;width:400px;text-align:center;top:107.08px;font-size:11.6px;line-height:11.6px;color:#262626;">Format</div>
<svg class="a" style="left:1605.2px;top:126.5px;" width="6" height="3" viewBox="0 0 6 3"><polygon points="0,0 6,0 3,3" fill="#555"/></svg>
<div class="t" style="left:1366px;width:400px;text-align:center;top:141.18px;font-size:11.6px;line-height:11.6px;color:#262626;">Cells</div>
<div class="a" style="left:1637.5px;top:68px;width:1px;height:84px;background:#c6c6c6"></div>
<svg class="a" style="left:1649px;top:70px;" width="16" height="15" viewBox="0 0 16 15"><path d="M15 1.5H1.5l6 6-6 6H15" fill="none" stroke="#444" stroke-width="2.2"/></svg>
<div class="t" style="left:1668.3px;top:72.93px;font-size:11.6px;line-height:11.6px;color:#262626;">AutoSum</div>
<svg class="a" style="left:1727.3px;top:76.5px;" width="6" height="3" viewBox="0 0 6 3"><polygon points="0,0 6,0 3,3" fill="#555"/></svg>
<svg class="a" style="left:1650px;top:93px;" width="14" height="16" viewBox="0 0 14 16"><rect x="0.5" y="0.5" width="13" height="15" fill="#fff" stroke="#777"/><rect x="0" y="0" width="14" height="2" fill="#666"/><path d="M7 4v8M4 9l3 3 3-3" fill="none" stroke="#3c78c0" stroke-width="1.8"/></svg>
<div class="t" style="left:1668.3px;top:95.88px;font-size:11.6px;line-height:11.6px;color:#262626;">Fill</div>
<svg class="a" style="left:1685.6px;top:100.0px;" width="6" height="3" viewBox="0 0 6 3"><polygon points="0,0 6,0 3,3" fill="#555"/></svg>
<svg class="a" style="left:1650px;top:116px;" width="14" height="14" viewBox="0 0 14 14"><path d="M9 1l4.5 4.5-7 7L2 12l-1.5-1.5z" fill="#e8808a"/><path d="M4.5 6l4.5 4.5" stroke="#f3f3f3" stroke-width="1"/></svg>
<div class="t" style="left:1668.3px;top:118.78px;font-size:11.6px;line-height:11.6px;color:#262626;">Clear</div>
<svg class="a" style="left:1697.6px;top:123.0px;" width="6" height="3" viewBox="0 0 6 3"><polygon points="0,0 6,0 3,3" fill="#555"/></svg>
<svg class="a" style="left:1743px;top:72px;" width="31" height="27" viewBox="0 0 31 27"><text x="0" y="13" font-size="14" font-weight="bold" fill="#3c78c0" font-family="Liberation Sans">A</text><text x="0.5" y="26" font-size="14" font-weight="bold" fill="#9b7fd0" font-family="Liberation Sans">Z</text><path d="M13 8h17l-7 7v7h-3v-7z" fill="#777"/><path d="M16 10h11l-5 5" fill="#9a9a9a"/></svg>
<div class="t" style="left:1559px;width:400px;text-align:center;top:106.78px;font-size:11.6px;line-height:11.6px;color:#262626;">Sort &amp;</div>
<div class="t" style="left:1555.3px;width:400px;text-align:center;top:122.38px;font-size:11.6px;line-height:11.6px;color:#262626;">Filter</div>
<div class="a" style="left:1742.8px;top:122.4px;width:0px;height:0px;"></div>
<svg class="a" style="left:1770.5px;top:127.0px;" width="6" height="3" viewBox="0 0 6 3"><polygon points="0,0 6,0 3,3" fill="#555"/></svg>
<svg class="a" style="left:1788px;top:72px;" width="28" height="27" viewBox="0 0 28 27"><circle cx="17" cy="10" r="8" fill="#fff" stroke="#3c78c0" stroke-width="2.4"/><path d="M11 16L2 25" stroke="#3c78c0" stroke-width="3.5" stroke-linecap="round"/></svg>
<div class="t" style="left:1602px;width:400px;text-align:center;top:106.78px;font-size:11.6px;line-height:11.6px;color:#262626;">Find &amp;</div>
<div class="t" style="left:1597.7px;width:400px;text-align:center;top:122.38px;font-size:11.6px;line-height:11.6px;color:#262626;">Select</div>
<svg class="a" style="left:1815.3px;top:127.0px;" width="6" height="3" viewBox="0 0 6 3"><polygon points="0,0 6,0 3,3" fill="#555"/></svg>
<div class="t" style="left:1534.4px;width:400px;text-align:center;top:141.68px;font-size:11.6px;line-height:11.6px;color:#262626;">Editing</div>
<div class="a" style="left:1831.5px;top:68px;width:1px;height:84px;background:#c6c6c6"></div>
<svg class="a" style="left:1846px;top:70px;" width="32" height="32" viewBox="0 0 32 32"><rect x="0.5" y="0.5" width="31" height="31" fill="#fff" stroke="#bbb"/><text x="3" y="8" font-size="6" fill="#333" font-family="Liberation Sans">MSFT</text><rect x="1.5" y="9.5" width="28" height="8" fill="#fff" stroke="#555"/><text x="4" y="16" font-size="6" fill="#3aa05a" font-family="Liberation Sans">$  47.24</text><polygon points="3,25 6,22 9,25" fill="#3aa05a"/><text x="11" y="25.5" font-size="5.5" fill="#444" font-family="Liberation Sans">0.26%</text></svg>
<div class="t" style="left:1661.4px;width:400px;text-align:center;top:107.18px;font-size:11.6px;line-height:11.6px;color:#262626;">Launch</div>
<div class="t" style="left:1661.4px;width:400px;text-align:center;top:142.36px;font-size:10.8px;line-height:10.8px;color:#262626;">Stock Co...</div>
<div class="a" style="left:1892.5px;top:68px;width:1px;height:84px;background:#c6c6c6"></div>
<svg class="a" style="left:1901px;top:146px;" width="11" height="6" viewBox="0 0 11 6"><path d="M0.5 5.5L5.5 0.5 10.5 5.5" fill="none" stroke="#444"/></svg>
<div class="a" style="left:0px;top:157px;width:1920px;height:46px;background:#e6e6e6"></div>
<div class="a" style="left:6px;top:167px;width:101px;height:26px;background:#fff;border:1px solid #c6c6c6"></div>
<div class="t" style="left:12px;top:173.93px;font-size:12.6px;line-height:12.6px;color:#262626;">B15</div>
<svg class="a" style="left:89px;top:177px;" width="9" height="5" viewBox="0 0 9 5"><polygon points="0,0 8,0 4,4.5" fill="#666"/></svg>
<div class="a" style="left:121px;top:176px;width:2px;height:2px;background:#a6a6a6"></div>
<div class="a" style="left:121px;top:180px;width:2px;height:2px;background:#a6a6a6"></div>
<div class="a" style="left:121px;top:184px;width:2px;height:2px;background:#a6a6a6"></div>
<div class="a" style="left:137px;top:167px;width:110px;height:26px;background:#fff;border:1px solid #c6c6c6"></div>
<svg class="a" style="left:150px;top:175px;" width="12" height="11" viewBox="0 0 12 11"><path d="M1 1l9.5 9.5M10.5 1L1 10.5" stroke="#c2c2c2" stroke-width="1.3"/></svg>
<svg class="a" style="left:185px;top:174px;" width="14" height="12" viewBox="0 0 14 12"><path d="M1 6.5l4 4.5 8-10" fill="none" stroke="#c2c2c2" stroke-width="1.8"/></svg>
<div class="t" style="left:221px;top:172.65px;font-size:14px;line-height:14px;color:#555;font-family:Liberation Serif;font-style:italic;font-weight:bold"><i>f</i><span style="font-size:11px">x</span></div>
<div class="a" style="left:250px;top:167px;width:1665px;height:26px;background:#fff;border:1px solid #c6c6c6"></div>
<svg class="a" style="left:1903px;top:177px;" width="8" height="6" viewBox="0 0 8 6"><path d="M1 1l3 3 3-3" fill="none" stroke="#666" stroke-width="1.6"/></svg>
<div class="a" style="left:0px;top:990px;width:1920px;height:28px;background:#e6e6e6"></div>
<div class="a" style="left:0px;top:990px;width:1899px;height:1px;background:#c6c6c6"></div>
<svg class="a" style="left:25px;top:999px;" width="6" height="9" viewBox="0 0 6 9"><polygon points="5,0 5,9 0,4.5" fill="#c2c2c2"/></svg>
<svg class="a" style="left:55px;top:999px;" width="6" height="9" viewBox="0 0 6 9"><polygon points="0,0 0,9 5,4.5" fill="#c2c2c2"/></svg>
<div class="a" style="left:100px;top:990px;width:65px;height:24px;background:#fff;border-left:1px solid #c6c6c6;border-right:1px solid #c6c6c6"></div>
<div class="a" style="left:100px;top:1012px;width:65px;height:2.5px;background:#1e6b43"></div>
<div class="t" style="left:-67.5px;width:400px;text-align:center;top:997.84px;font-size:12px;line-height:12px;color:#1e6b43;font-weight:bold;">Sheet1</div>
<svg class="a" style="left:197px;top:996px;" width="17" height="17" viewBox="0 0 17 17"><circle cx="8.5" cy="8.5" r="7.5" fill="none" stroke="#777" stroke-width="1.1"/><path d="M8.5 4.5v8M4.5 8.5h8" stroke="#555" stroke-width="1.5"/></svg>
<div class="a" style="left:1152px;top:1000px;width:2px;height:2px;background:#b0b0b0"></div>
<div class="a" style="left:1152px;top:1004px;width:2px;height:2px;background:#b0b0b0"></div>
<div class="a" style="left:1152px;top:1008px;width:2px;height:2px;background:#b0b0b0"></div>
<div class="a" style="left:1169px;top:997px;width:16px;height:15px;background:#fff;border:1px solid #c6c6c6"></div>
<svg class="a" style="left:1169px;top:997px;" width="16" height="15" viewBox="0 0 16 15"><polygon points="10,4 10,11 6,7.5" fill="#555"/></svg>
<div class="a" style="left:1184px;top:997px;width:612px;height:15px;background:#fff;border:1px solid #c6c6c6"></div>
<div class="a" style="left:1796px;top:998px;width:88px;height:13px;background:#dadada"></div>
<div class="a" style="left:1884px;top:997px;width:15px;height:15px;background:#fff;border:1px solid #c6c6c6"></div>
<svg class="a" style="left:1884px;top:997px;" width="15" height="15" viewBox="0 0 15 15"><polygon points="5,4 5,11 9,7.5" fill="#555"/></svg>
<div class="a" style="left:0px;top:1018px;width:1920px;height:22px;background:#f3f3f3"></div>
<div class="a" style="left:0px;top:1018px;width:1920px;height:1px;background:#dcdcdc"></div>
<svg class="a" style="left:8px;top:1021px;" width="14" height="14" viewBox="0 0 14 14"><circle cx="3" cy="3" r="2.5" fill="#555"/><rect x="1.5" y="5.5" width="11" height="8" fill="#fff" stroke="#666"/><path d="M1.5 8.5h11M1.5 11h11M5 5.5v8M8.5 5.5v8" stroke="#666" stroke-width="0.8"/><rect x="7" y="1" width="6" height="3" fill="#666"/></svg>
<svg class="a" style="left:1501px;top:1021px;" width="17" height="15" viewBox="0 0 17 15"><rect x="0.5" y="0.5" width="13" height="9" fill="#555"/><path d="M5 10v3h5" stroke="#555" stroke-width="1.5"/><circle cx="12" cy="11" r="3" fill="#555" stroke="#f3f3f3"/></svg>
<div class="t" style="left:1519.7px;top:1023.68px;font-size:11.6px;line-height:11.6px;color:#262626;">Display Settings</div>
<div class="a" style="left:1620px;top:1018px;width:40px;height:22px;background:#d2d2d2"></div>
<svg class="a" style="left:1633px;top:1023px;" width="14" height="13" viewBox="0 0 14 13"><rect x="0.5" y="0.5" width="13" height="12" fill="none" stroke="#666"/><path d="M0.5 4.5h13M0.5 8.5h13M4.5 0.5v12M9.5 0.5v12" stroke="#666"/></svg>
<svg class="a" style="left:1673px;top:1022px;" width="15" height="14" viewBox="0 0 15 14"><rect x="0.5" y="0.5" width="14" height="13" fill="none" stroke="#666"/><rect x="3.5" y="3.5" width="8" height="7" fill="none" stroke="#666"/><path d="M5 6h5M5 8h5" stroke="#666"/></svg>
<svg class="a" style="left:1713px;top:1022px;" width="15" height="14" viewBox="0 0 15 14"><rect x="0.5" y="0.5" width="14" height="13" fill="none" stroke="#666"/><path d="M0.5 7.5h5v6M9.5 13.5v-6h5M5.5 0.5v4M9.5 0.5v4" fill="none" stroke="#666"/></svg>
<div class="a" style="left:1746px;top:1028px;width:8px;height:1px;background:#444"></div>
<div class="a" style="left:1760px;top:1028px;width:99px;height:1px;background:#b0b0b0"></div>
<div class="a" style="left:1809px;top:1025px;width:1px;height:6px;background:#999"></div>
<div class="a" style="left:1826px;top:1023px;width:6px;height:12px;background:#555"></div>
<div class="a" style="left:1864px;top:1028px;width:8px;height:1px;background:#444"></div>
<div class="a" style="left:1867.5px;top:1024.5px;width:1px;height:8px;background:#444"></div>
<div class="t" style="left:1698px;width:400px;text-align:center;top:1023.18px;font-size:11.6px;line-height:11.6px;color:#262626;">220%</div>
<div class="a" style="left:0px;top:1040px;width:1920px;height:40px;background:#1b1b1b"></div>
<svg class="a" style="left:16px;top:1052px;" width="17" height="17" viewBox="0 0 17 17"><path d="M0 2.3L6.8 1.4V8H0zM7.6 1.3L17 0v8H7.6zM0 8.8h6.8v6.7L0 14.6zM7.6 8.8H17V17l-9.4-1.3z" fill="#fff"/></svg>
<svg class="a" style="left:63px;top:1051px;" width="18" height="19" viewBox="0 0 18 19"><circle cx="11" cy="7" r="6" fill="none" stroke="#fff" stroke-width="1.4"/><path d="M7 11.5L1 18" stroke="#fff" stroke-width="1.6"/></svg>
<svg class="a" style="left:111px;top:1051px;" width="18" height="18" viewBox="0 0 18 18"><rect x="1" y="3" width="12" height="12" fill="none" stroke="#fff" stroke-width="1.4"/><path d="M1 1h12M1 17h12M16 1v3M16 7v4M16 14v3" stroke="#fff" stroke-width="1.4"/></svg>
<svg class="a" style="left:159px;top:1050px;" width="24" height="19" viewBox="0 0 24 19"><path d="M0 2h9l2 2h13v15H0z" fill="#f7c444"/><rect x="0" y="6" width="24" height="13" fill="#ffd863"/><rect x="6" y="12" width="12" height="7" fill="#2a7ad5"/><rect x="9" y="14" width="6" height="5" fill="#ffd863"/></svg>
<div class="a" style="left:151px;top:1078px;width:40px;height:2px;background:#76b9ed"></div>
<svg class="a" style="left:208px;top:1049px;" width="23" height="23" viewBox="0 0 23 23"><circle cx="11.5" cy="11.5" r="11" fill="#fff"/><circle cx="11.5" cy="11.5" r="9" fill="#3d8ed8"/><path d="M14 5q-6-1-6 3t4 4-4 6" fill="none" stroke="#fff" stroke-width="2.2"/></svg>
<svg class="a" style="left:257px;top:1049px;" width="23" height="23" viewBox="0 0 23 23"><circle cx="11.5" cy="11.5" r="11" fill="#db4437"/><path d="M11.5 11.5L2 17A11 11 0 0 0 13 22.9z" fill="#0f9d58"/><path d="M11.5 11.5L22.5 11.5A11 11 0 0 1 13 22.9z" fill="#ffcd40"/><circle cx="11.5" cy="11.5" r="5" fill="#fff"/><circle cx="11.5" cy="11.5" r="4" fill="#4285f4"/></svg>
<div class="a" style="left:249px;top:1078px;width:40px;height:2px;background:#76b9ed"></div>
<svg class="a" style="left:306px;top:1049px;" width="24" height="24" viewBox="0 0 24 24"><circle cx="12" cy="12" r="12" fill="#4b9d6a"/><ellipse cx="12" cy="12" rx="9" ry="3.5" fill="none" stroke="#d5f0dd" stroke-width="1.1"/><ellipse cx="12" cy="12" rx="9" ry="3.5" fill="none" stroke="#d5f0dd" stroke-width="1.1" transform="rotate(60 12 12)"/><ellipse cx="12" cy="12" rx="9" ry="3.5" fill="none" stroke="#d5f0dd" stroke-width="1.1" transform="rotate(-60 12 12)"/><circle cx="12" cy="12" r="1.5" fill="#d5f0dd"/></svg>
<div class="a" style="left:298px;top:1078px;width:40px;height:2px;background:#76b9ed"></div>
<div class="a" style="left:344px;top:1040px;width:48px;height:40px;background:#424242"></div>
<svg class="a" style="left:354px;top:1050px;" width="25" height="21" viewBox="0 0 25 21"><rect x="6" y="0" width="19" height="21" rx="1" fill="#21a366"/><rect x="6" y="7" width="19" height="7" fill="#107c41"/><rect x="15" y="0" width="10" height="21" fill="#33c481" opacity="0.6"/><rect x="0" y="4" width="13" height="13" rx="1" fill="#185c37"/><path d="M3.5 7l6 7M9.5 7l-6 7" stroke="#fff" stroke-width="1.6"/></svg>
<div class="a" style="left:344px;top:1078px;width:48px;height:2px;background:#76b9ed"></div>
<svg class="a" style="left:405px;top:1050px;" width="21" height="21" viewBox="0 0 21 21"><path d="M10.5 0l2 3 3.5-1 .5 3.5 3.5 1-1 3.5 2.5 2-2.5 2.5 1 3.5-3.5.5-1 3.5-3.5-1-2 3-2-3-3.5 1-.5-3.5-3.5-1 1-3.5L0 10.5l2.5-2-1-3.5 3.5-1 .5-3.5 3.5 1z" fill="#fff"/><circle cx="10.5" cy="10.5" r="4" fill="#1b1b1b"/></svg>
<div class="a" style="left:396px;top:1078px;width:40px;height:2px;background:#76b9ed"></div>
<div class="a" style="left:446px;top:1078px;width:40px;height:2px;background:#76b9ed"></div>
<svg class="a" style="left:452px;top:1049px;" width="25" height="24" viewBox="0 0 25 24"><rect x="0" y="0" width="25" height="24" rx="2" fill="#e8562a"/><path d="M18 7h-9v10h9" fill="none" stroke="#fff" stroke-width="3.2"/></svg>
</body></html>
